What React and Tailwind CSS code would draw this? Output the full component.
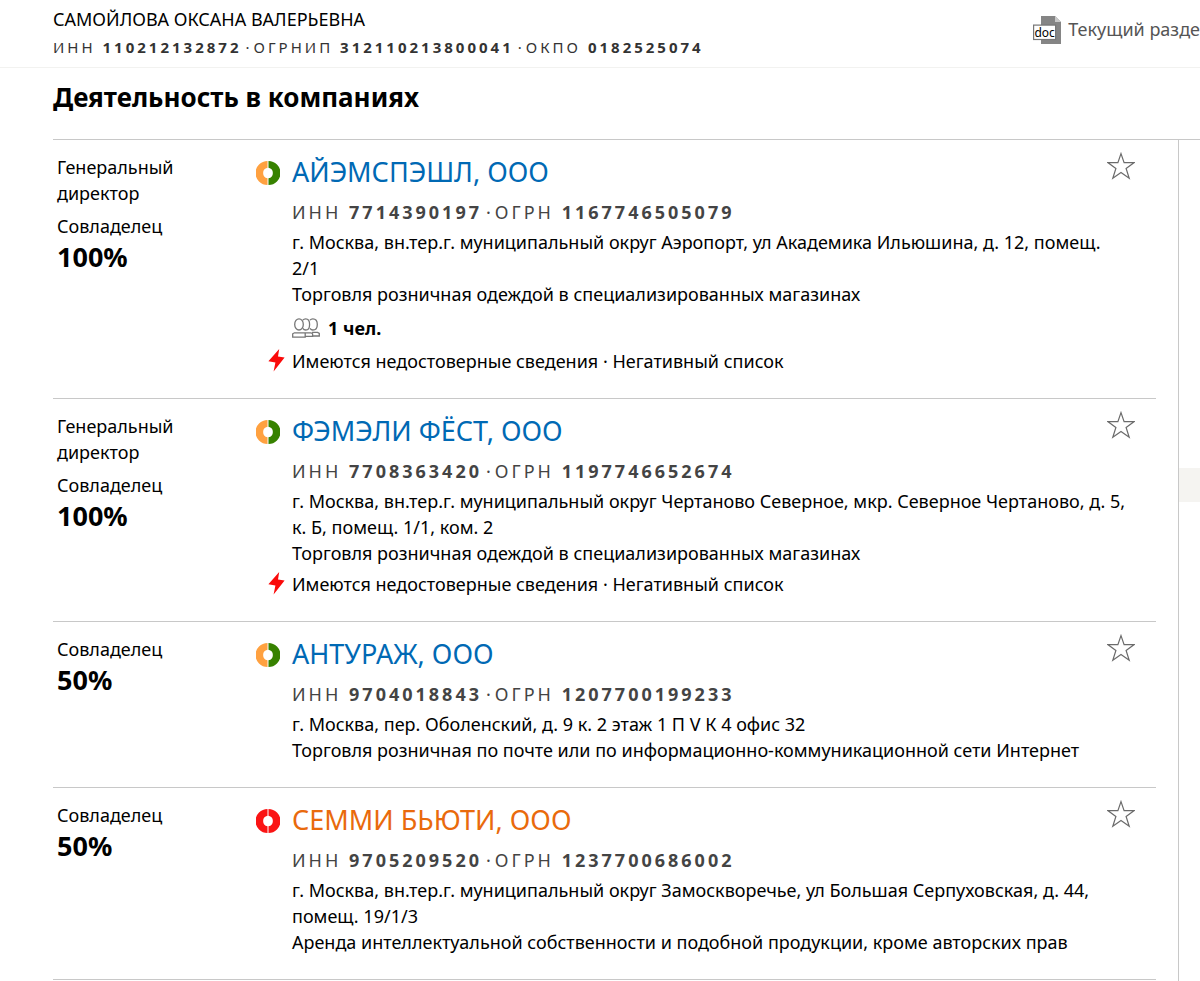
import React, { useState } from 'react';

const companies = [
  {
    name: 'АЙЭМСПЭШЛ, ООО',
    inn: '7714390197',
    ogrn: '1167746505079',
    director: true,
    share: '100%',
    address: 'г. Москва, вн.тер.г. муниципальный округ Аэропорт, ул Академика Ильюшина, д. 12, помещ. 2/1',
    activity: 'Торговля розничная одеждой в специализированных магазинах',
    staff: '1 чел.',
    alert: 'Имеются недостоверные сведения · Негативный список',
    status: 'active',
  },
  {
    name: 'ФЭМЭЛИ ФЁСТ, ООО',
    inn: '7708363420',
    ogrn: '1197746652674',
    director: true,
    share: '100%',
    address: 'г. Москва, вн.тер.г. муниципальный округ Чертаново Северное, мкр. Северное Чертаново, д. 5, к. Б, помещ. 1/1, ком. 2',
    activity: 'Торговля розничная одеждой в специализированных магазинах',
    alert: 'Имеются недостоверные сведения · Негативный список',
    status: 'active',
  },
  {
    name: 'АНТУРАЖ, ООО',
    inn: '9704018843',
    ogrn: '1207700199233',
    share: '50%',
    address: 'г. Москва, пер. Оболенский, д. 9 к. 2 этаж 1 П V К 4 офис 32',
    activity: 'Торговля розничная по почте или по информационно-коммуникационной сети Интернет',
    status: 'active',
  },
  {
    name: 'СЕММИ БЬЮТИ, ООО',
    inn: '9705209520',
    ogrn: '1237700686002',
    share: '50%',
    address: 'г. Москва, вн.тер.г. муниципальный округ Замоскворечье, ул Большая Серпуховская, д. 44, помещ. 19/1/3',
    activity: 'Аренда интеллектуальной собственности и подобной продукции, кроме авторских прав',
    status: 'warning',
  },
];

// Two half rings, one color per side
function StatusRing({ status }) {
  const left = status === 'warning' ? '#fa1414' : '#ffa140';
  const right = status === 'warning' ? '#fa1414' : '#378200';
  return (
    <svg className="size-6 shrink-0" viewBox="0 0 24 24" aria-hidden="true">
      <path d="M11.5 0A12 12 0 0 0 11.5 24V17.3A5.4 5.4 0 0 1 11.5 6.7Z" fill={left} />
      <path d="M12.5 0A12 12 0 0 1 12.5 24V17.3A5.4 5.4 0 0 0 12.5 6.7Z" fill={right} />
    </svg>
  );
}

function StarIcon({ filled }) {
  return (
    <svg className="size-7" viewBox="0 0 28 28" aria-hidden="true">
      <path
        d="M14 1.6L17.1 10.7H26.9L19.1 16.4L22.2 26.2L14 20.5L5.8 26.2L8.9 16.4L1.1 10.7H10.9Z"
        fill={filled ? '#ffa140' : 'none'}
        stroke="#6b6b6b"
        strokeWidth="1.2"
      />
    </svg>
  );
}

function PeopleIcon() {
  return (
    <svg className="h-5 w-7 shrink-0" viewBox="0 0 28 20" fill="none" stroke="#777" strokeWidth="1.3" aria-hidden="true">
      <path d="M10.8 2.2C11.5 1.3 12.5 .8 13.7 .8C16 .8 17.6 3.2 17.6 6.4C17.6 9.6 16 12 13.7 12C12.5 12 11.5 11.4 10.8 10.4" />
      <path d="M18 2.2C18.7 1.3 19.7 .8 20.8 .8C23.6 .8 25.3 3.2 25.3 6.4C25.3 9.6 23.6 12 20.8 12C19.7 12 18.7 11.4 18 10.4" />
      <ellipse cx="7" cy="6.4" rx="4.3" ry="5.6" />
      <path d="M.7 19.2V15.8L2.5 14.8H13.2V19.2ZM13.2 14.8H19L20.6 15.8V18.4H13.2M20 14.4H25.6L27.3 15.4V18H20.6" />
    </svg>
  );
}

function BoltIcon() {
  return (
    <svg className="h-6 w-[18px] shrink-0" viewBox="0 0 18 24" aria-hidden="true">
      <path d="M11.2 0L.4 12.2L7.4 13.6L5.6 22.4L16.6 8.6L10 7.6Z" fill="#fa0a0a" />
    </svg>
  );
}

function DocIcon() {
  return (
    <svg className="h-7 w-[29px] shrink-0" viewBox="0 0 29 28" aria-hidden="true">
      <path d="M8 0H22L28 6V28H8Z" fill="#858585" />
      <path d="M22 0V6H28Z" fill="#c9c9c9" />
      <rect x=".6" y="9.1" width="22" height="14.4" fill="#fff" stroke="#777" strokeWidth="1.2" />
      <text x="11.6" y="20.5" textAnchor="middle" fontSize="12" fill="#000">doc</text>
    </svg>
  );
}

function Dot() {
  return <span className="px-1 tracking-normal">·</span>;
}

function CompanyRow({ company }) {
  const [favorite, setFavorite] = useState(false);

  return (
    <article className="flex border-b border-[#c8c8c8] pb-6">
      {/* Role and share */}
      <div className="w-[203px] shrink-0 pt-[14px] pl-1">
        {company.director && <p className="mb-[7px] w-32">Генеральный директор</p>}
        <p>Совладелец</p>
        <p className="text-[27px] leading-9 font-bold">{company.share}</p>
      </div>

      <div className="w-9 shrink-0 pt-[21px]">
        <StatusRing status={company.status} />
      </div>

      {/* Company details */}
      <div className="min-w-0 flex-1 pt-3 pr-7">
        <div className="flex items-start justify-between">
          <h2 className="text-[27px] leading-10">
            <a
              href="#"
              className={company.status === 'warning' ? 'text-[#e96a0c] hover:underline' : 'text-[#0069b4] hover:underline'}
            >
              {company.name}
            </a>
          </h2>
          <button
            type="button"
            className="-mr-[7px] cursor-pointer"
            aria-label="В избранное"
            aria-pressed={favorite}
            onClick={() => setFavorite(!favorite)}
          >
            <StarIcon filled={favorite} />
          </button>
        </div>
        <p className="mt-[7px] mb-1 tracking-[3px] text-[#444]">
          ИНН <b>{company.inn}</b>
          <Dot />
          ОГРН <b>{company.ogrn}</b>
        </p>
        <p>{company.address}</p>
        <p>{company.activity}</p>
        {company.staff && (
          <p className="mt-2 mb-[7px] flex items-center gap-2 font-bold">
            <PeopleIcon />
            {company.staff}
          </p>
        )}
        {company.alert && (
          <p className="mt-[5px] -ml-6 flex items-center gap-[6px]">
            <BoltIcon />
            {company.alert}
          </p>
        )}
      </div>
    </article>
  );
}

function App() {
  return (
    <div className="flex min-h-screen flex-col overflow-hidden bg-white font-['Noto_Sans',sans-serif] text-lg leading-[26px] text-black">
      {/* Header */}
      <header className="flex justify-between border-b border-[#f2f2f0] pt-[6px] pb-2 pl-[53px]">
        <div>
          <p className="leading-[26px]">САМОЙЛОВА ОКСАНА ВАЛЕРЬЕВНА</p>
          <p className="mt-[3px] text-[15px] leading-6 tracking-[3px] text-[#333]">
            ИНН <b>110212132872</b>
            <Dot />
            ОГРНИП <b>312110213800041</b>
            <Dot />
            ОКПО <b>0182525074</b>
          </p>
        </div>
        <a href="#" className="mt-[10px] flex items-start gap-[6px] leading-[26px] whitespace-nowrap text-[#555]">
          <DocIcon />
          Текущий разде
        </a>
      </header>

      <main className="flex flex-1 flex-col pl-[53px]">
        <h1 className="mb-[13px] py-[11px] text-[26px] leading-9 font-bold">Деятельность в компаниях</h1>

        <div className="flex flex-1 border-t border-[#c8c8c8]">
          <section className="min-w-0 flex-1">
            {companies.map((company) => (
              <CompanyRow key={company.inn} company={company} />
            ))}
          </section>

          {/* Right rail */}
          <aside className="ml-[22px] w-[22px] shrink-0 border-l border-[#c8c8c8] pt-[328px]">
            <div className="h-[34px] bg-[#f5f4f1]" />
          </aside>
        </div>
      </main>
    </div>
  );
}

export default App;
